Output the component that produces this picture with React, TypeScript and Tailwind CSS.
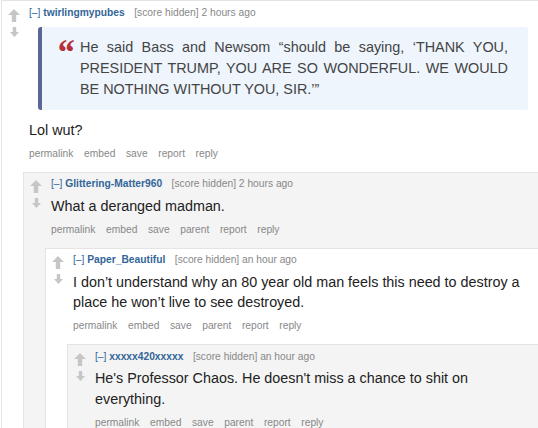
import type { ReactNode } from 'react';

function Arrows() {
  return (
    <div className="flex w-[12px] shrink-0 flex-col items-center pt-[7.5px]">
      <svg width="12" height="13" viewBox="0 0 12 13">
        <path d="M6 0L12 6H8.2V13H3.8V6H0Z" fill="#c6c6c6" />
      </svg>
      <svg className="mt-[5px]" width="9" height="10" viewBox="0 0 9 10">
        <path d="M2.8 0H6.2V5H9L4.5 10L0 5H2.8Z" fill="#c6c6c6" />
      </svg>
    </div>
  );
}

type CommentProps = {
  user: string;
  time: string;
  buttons: string[];
  bg: string;
  children: ReactNode;
  child?: ReactNode;
};

function Comment({ user, time, buttons, bg, children, child }: CommentProps) {
  return (
    <div className={`border-l border-t border-[#e4e4e4] ${bg}`}>
      <div className="flex pl-[6px]">
        <Arrows />
        <div className="ml-[9px] min-w-0 flex-1 pr-[10px] pt-[4.5px]">
          {/* tagline */}
          <div className="whitespace-nowrap text-[10.25px] leading-[14px] text-[#888]">
            <span className="text-[#369]">[–]</span>{' '}
            <span className="font-bold text-[#369]">{user}</span>
            <span className="ml-[9.5px]">[score hidden] {time}</span>
          </div>
          <div className="mt-[4.5px] text-[14.35px] leading-[20.5px] text-[#222]">{children}</div>
          <ul className="mt-[6.5px] flex gap-[10.6px] text-[10.25px] leading-[14px] text-[#888]">
            {buttons.map((b) => (
              <li key={b}>{b}</li>
            ))}
          </ul>
        </div>
      </div>
      {child && <div className="ml-[21px] mt-[11px]">{child}</div>}
    </div>
  );
}

export default function App() {
  const nested = ['permalink', 'embed', 'save', 'parent', 'report', 'reply'];
  return (
    <div className="h-[428px] w-[538px] overflow-hidden bg-white pl-[1px] font-['Liberation_Sans',Arial,sans-serif]">
      <Comment
        user="twirlingmypubes"
        time="2 hours ago"
        bg="bg-white"
        buttons={['permalink', 'embed', 'save', 'report', 'reply']}
        child={
          <Comment
            user="Glittering-Matter960"
            time="2 hours ago"
            bg="bg-[#f4f4f4]"
            buttons={nested}
            child={
              <Comment
                user="Paper_Beautiful"
                time="an hour ago"
                bg="bg-white"
                buttons={nested}
                child={
                  <Comment user="xxxxx420xxxxx" time="an hour ago" bg="bg-[#f4f4f4]" buttons={nested}>
                    <p>He's Professor Chaos. He doesn't miss a chance to shit on everything.</p>
                  </Comment>
                }
              >
                <p>I don’t understand why an 80 year old man feels this need to destroy a place he won’t live to see destroyed.</p>
              </Comment>
            }
          >
            <p>What a deranged madman.</p>
          </Comment>
        }
      >
        <blockquote className="relative mb-[9.5px] ml-[9px] mt-[7.5px] rounded-[3px] border-l-4 border-[#5b6697] bg-[#eef5fd] pb-[10.5px] pl-[38px] pr-[20px] pt-[9.5px] text-justify text-[14.4px] leading-[21px] text-[#444]">
          <span className="absolute left-[14px] top-[7px] font-['Liberation_Serif',serif] text-[36px] font-bold italic leading-none text-[#b3303a]">
            “
          </span>
          He said Bass and Newsom “should be saying, ‘THANK YOU, PRESIDENT TRUMP, YOU ARE SO WONDERFUL. WE WOULD BE NOTHING WITHOUT YOU, SIR.’”
        </blockquote>
        <p>Lol wut?</p>
      </Comment>
    </div>
  );
}
